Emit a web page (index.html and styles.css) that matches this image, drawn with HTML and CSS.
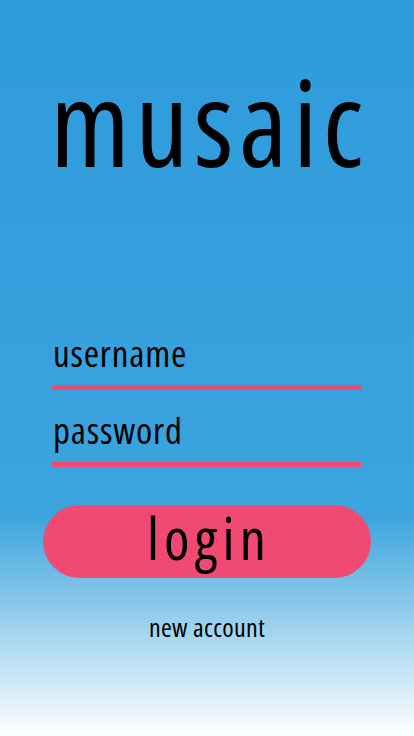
FILE: index.html
```html
<!DOCTYPE html>
<html lang="en">
<head>
<meta charset="utf-8">
<meta name="viewport" content="width=device-width, initial-scale=1">
<title>musaic</title>
<link rel="stylesheet" href="styles.css">
</head>
<body>
<main class="screen">
  <h1 class="logo">musaic</h1>
  <form class="form">
    <input class="field" type="text" placeholder="username">
    <input class="field field-pass" type="password" placeholder="password">
    <button class="login" type="button">login</button>
  </form>
  <a class="new-account" href="#">new account</a>
</main>
</body>
</html>
```
FILE: styles.css
```css
html, body {
  margin: 0;
  padding: 0;
}
body {
  width: 414px;
  height: 736px;
  overflow: hidden;
  background: linear-gradient(180deg, #2e9bdc 0%, #3ca4de 70%, #ffffff 100%);
  font-family: "Open Sans", "DejaVu Sans", sans-serif;
  font-stretch: condensed;
  color: #000;
}
.screen {
  display: flex;
  flex-direction: column;
  align-items: center;
}
.logo {
  margin: 63px -5px 0 0;
  font-size: 118px;
  line-height: 118px;
  font-weight: 400;
  letter-spacing: 5.5px;
}
.form {
  display: flex;
  flex-direction: column;
  align-items: center;
  margin-top: 150px;
}
.field {
  display: block;
  box-sizing: border-box;
  width: 309px;
  margin: 0 0 0 -1px;
  padding: 0 0 10px 1px;
  border: 0;
  border-bottom: 5px solid #f04a72;
  background: transparent;
  font-family: inherit;
  font-stretch: inherit;
  font-size: 37px;
  line-height: 44px;
  letter-spacing: 0.8px;
  color: #000;
  outline: none;
}
.field::placeholder {
  color: #000;
  opacity: 1;
}
.field-pass {
  margin-top: 18px;
}
.login {
  margin-top: 38px;
  width: 328px;
  height: 73px;
  border: 0;
  border-radius: 37px;
  background: #f04a72;
  font-family: inherit;
  font-stretch: inherit;
  font-size: 58px;
  line-height: 1;
  letter-spacing: 5.2px;
  text-indent: 4px;
  color: #000;
  padding: 0 0 8px;
}
.new-account {
  margin-top: 36px;
  font-size: 26px;
  line-height: 1;
  letter-spacing: 0.3px;
  color: #000;
  text-decoration: none;
}
```
